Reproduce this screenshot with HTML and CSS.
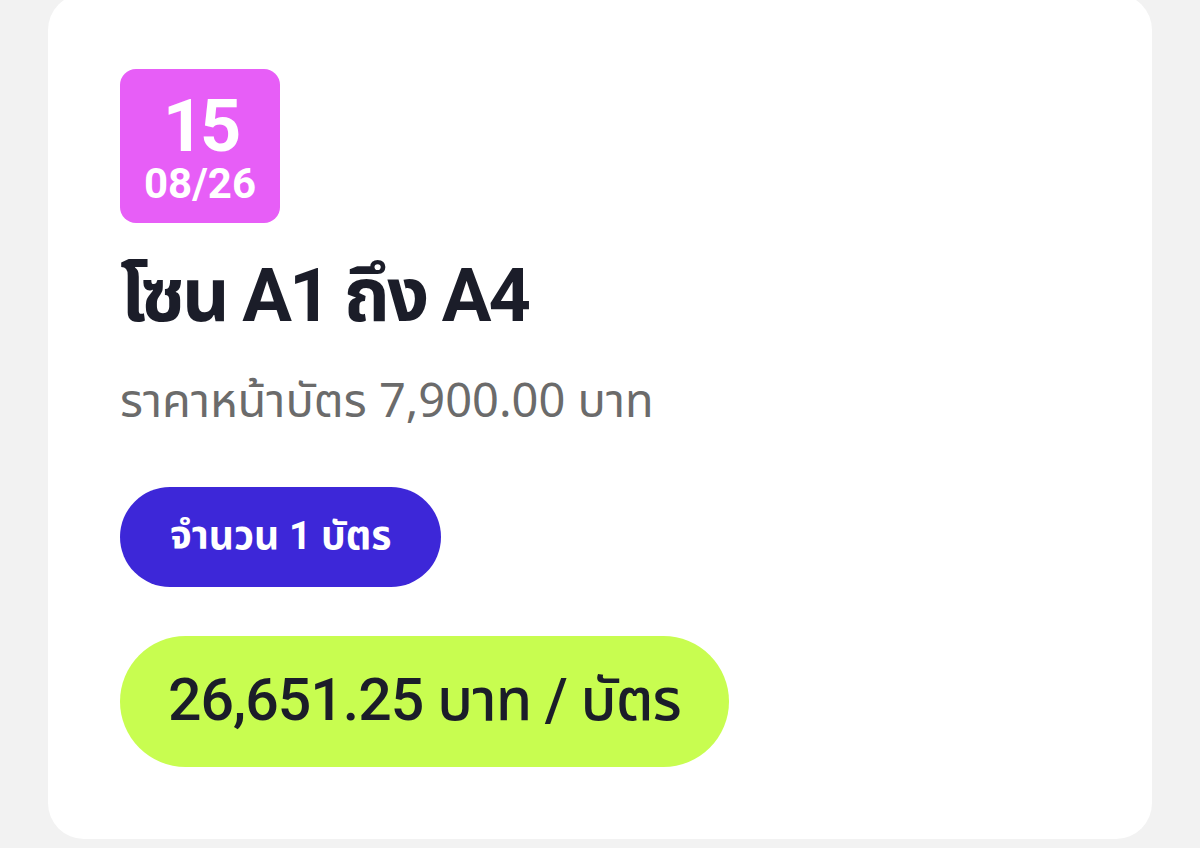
FILE: index.html
```html
<!DOCTYPE html>
<html lang="th">
<head>
  <meta charset="UTF-8" />
  <meta name="viewport" content="width=device-width, initial-scale=1.0"/>
  <title>บัตร</title>
  <link rel="stylesheet" href="styles.css">
</head>
<body>
  <div class="ticket-card">
    <div class="date-badge">
      <div class="date-day">15</div>
      <div class="date-month">08/26</div>
    </div>

    <h1 class="zone-title">โซน A1 ถึง A4</h1>
    <div class="face-price">ราคาหน้าบัตร 7,900.00 บาท</div>

    <div class="qty-pill">จำนวน 1 บัตร</div>

    <div class="price-pill">26,651.25 บาท / บัตร</div>
  </div>
</body>
</html>
```

FILE: styles.css
```css
:root {
  font-family: 'Noto Sans Thai', 'Noto Sans', Roboto, sans-serif;
  --bg: #f2f2f2;
  --card: #ffffff;
  --ink: #1b1d29;
  --subtle: #6b6b6b;
  --pink: #e75ef7;
  --indigo: #3d27d8;
  --lime: #c8fd50;
}

html, body {
  margin: 0;
  padding: 0;
  background: var(--bg);
  color: var(--ink);
  height: 100%;
  overflow: hidden;
}

body {
  padding: 0 48px;
  box-sizing: border-box;
}

.ticket-card {
  background: var(--card);
  border-radius: 36px;
  margin-top: -6px;
  height: 845px;
  box-sizing: border-box;
  padding: 75px 72px 0;
  display: flex;
  flex-direction: column;
  align-items: flex-start;
}

.date-badge {
  width: 160px;
  height: 154px;
  border-radius: 16px;
  background: var(--pink);
  color: #fff;
  display: flex;
  flex-direction: column;
  align-items: center;
  justify-content: center;
  font-family: Roboto, sans-serif;
  font-weight: 700;
}

.date-day {
  font-size: 72px;
  line-height: 1;
  letter-spacing: -4px;
  margin-top: 4px;
}

.date-month {
  font-size: 42px;
  line-height: 1;
}

/* latin digits in Roboto, thai falls through to Noto Sans Thai */
.zone-title,
.qty-pill,
.price-pill {
  font-family: Roboto, 'Noto Sans Thai', sans-serif;
}

.zone-title {
  margin: 28px 0 0;
  font-size: 74px;
  font-weight: 700;
  letter-spacing: -3px;
  line-height: 90px;
}

.face-price {
  margin-top: 32px;
  font-size: 47px;
  color: var(--subtle);
  line-height: 60px;
}

.qty-pill {
  margin-top: 54px;
  height: 100px;
  padding: 0 50px;
  border-radius: 50px;
  background: var(--indigo);
  color: #fff;
  font-size: 39px;
  font-weight: 700;
  display: flex;
  align-items: center;
}

.price-pill {
  margin-top: 49px;
  height: 131px;
  padding: 0 48px;
  border-radius: 66px;
  background: var(--lime);
  color: var(--ink);
  font-size: 59px;
  font-weight: 500;
  letter-spacing: -1px;
  display: flex;
  align-items: center;
}
```
